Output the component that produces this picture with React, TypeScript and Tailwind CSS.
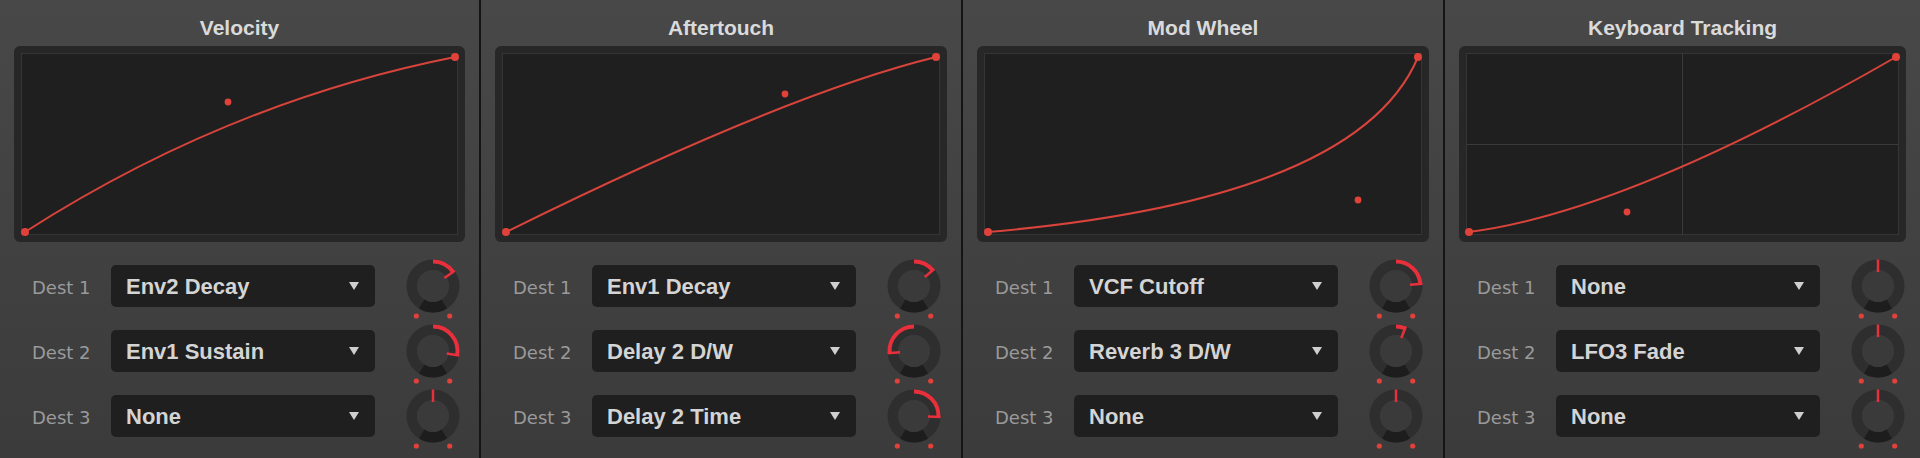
type Row = { dest: string; value: string; knob: number };

type Panel = {
  title: string;
  width: string;
  plotW: number;
  start: [number, number];
  end: [number, number];
  ctrl: [number, number];
  grid?: boolean;
  rows: Row[];
};

const RED = "#e0423a";

const panels: Panel[] = [
  {
    title: "Velocity",
    width: "w-[479px]",
    plotW: 435,
    start: [3, 178],
    end: [433, 3],
    ctrl: [206, 48],
    rows: [
      { dest: "Dest 1", value: "Env2 Decay", knob: 55 },
      { dest: "Dest 2", value: "Env1 Sustain", knob: 100 },
      { dest: "Dest 3", value: "None", knob: 0 },
    ],
  },
  {
    title: "Aftertouch",
    width: "w-[480px]",
    plotW: 436,
    start: [3, 178],
    end: [433, 3],
    ctrl: [282, 40],
    rows: [
      { dest: "Dest 1", value: "Env1 Decay", knob: 50 },
      { dest: "Dest 2", value: "Delay 2 D/W", knob: -95 },
      { dest: "Dest 3", value: "Delay 2 Time", knob: 92 },
    ],
  },
  {
    title: "Mod Wheel",
    width: "w-[480px]",
    plotW: 436,
    start: [3, 178],
    end: [433, 3],
    ctrl: [373, 146],
    rows: [
      { dest: "Dest 1", value: "VCF Cutoff", knob: 85 },
      { dest: "Dest 2", value: "Reverb 3 D/W", knob: 22 },
      { dest: "Dest 3", value: "None", knob: 0 },
    ],
  },
  {
    title: "Keyboard Tracking",
    width: "flex-1",
    plotW: 431,
    start: [2, 178],
    end: [429, 3],
    ctrl: [160, 158],
    grid: true,
    rows: [
      { dest: "Dest 1", value: "None", knob: 0 },
      { dest: "Dest 2", value: "LFO3 Fade", knob: 0 },
      { dest: "Dest 3", value: "None", knob: 0 },
    ],
  },
];

// point on a circle around the knob centre, angle measured clockwise from the top
function pt(r: number, deg: number): [number, number] {
  const a = (deg * Math.PI) / 180;
  return [35 + r * Math.sin(a), 35 - r * Math.cos(a)];
}

function arc(r: number, a0: number, a1: number) {
  const [x0, y0] = pt(r, a0);
  const [x1, y1] = pt(r, a1);
  const large = Math.abs(a1 - a0) > 180 ? 1 : 0;
  const sweep = a1 > a0 ? 1 : 0;
  return `M${x0} ${y0} A${r} ${r} 0 ${large} ${sweep} ${x1} ${y1}`;
}

function Knob({ value }: { value: number }) {
  const [tx0, ty0] = pt(14, value);
  const [tx1, ty1] = pt(26.5, value);
  return (
    <svg width="70" height="70" viewBox="0 0 70 70" className="shrink-0 ml-[23px]">
      <circle cx="35" cy="35" r="21.25" fill="none" stroke="#2e2e2e" strokeWidth="10.5" />
      <path d={arc(21.25, 148, 212)} fill="none" stroke="#1d1d1d" strokeWidth="10.5" />
      <circle cx="35" cy="35" r="16" fill="#3a3a3a" />
      {value !== 0 && (
        <path d={arc(24.5, 0, value)} fill="none" stroke="#e8303c" strokeWidth="4" />
      )}
      <line x1={tx0} y1={ty0} x2={tx1} y2={ty1} stroke="#e8303c" strokeWidth="2.5" />
      <circle cx="18.3" cy="65" r="2.6" fill={RED} />
      <circle cx="51.7" cy="65" r="2.6" fill={RED} />
    </svg>
  );
}

function Curve({ p }: { p: Panel }) {
  const [sx, sy] = p.start;
  const [ex, ey] = p.end;
  const [cx, cy] = p.ctrl;
  return (
    <svg width={p.plotW} height="180" className="block overflow-visible">
      {p.grid && (
        <g stroke="#3a3a3a" strokeWidth="1">
          <line x1={p.plotW / 2} y1="0" x2={p.plotW / 2} y2="180" />
          <line x1="0" y1="90.5" x2={p.plotW} y2="90.5" />
        </g>
      )}
      <path
        d={`M${sx} ${sy} Q${cx} ${cy} ${ex} ${ey}`}
        fill="none"
        stroke="#d8443c"
        strokeWidth="2"
      />
      <circle cx={sx} cy={sy} r="4" fill={RED} />
      <circle cx={ex} cy={ey} r="4" fill={RED} />
      <circle cx={cx} cy={cy} r="3.4" fill={RED} />
    </svg>
  );
}

function Dropdown({ value }: { value: string }) {
  return (
    <div className="w-[264px] h-[42px] shrink-0 rounded-[5px] bg-[#1f1f1f] flex items-center justify-between pl-[15px] pr-[16px]">
      <span className="text-[22px] font-bold text-[#d4d4d4] leading-none pt-[2px] font-['Liberation_Sans',Arial,sans-serif]">
        {value}
      </span>
      <svg width="10" height="8" viewBox="0 0 10 8">
        <path d="M0 0 L10 0 L5 8 Z" fill="#cfcfcf" />
      </svg>
    </div>
  );
}

function ModPanel({ p }: { p: Panel }) {
  return (
    <div className={`${p.width} h-full flex flex-col`}>
      <h2 className="pt-[16px] h-[46px] text-center text-[21px] leading-[24px] font-bold text-[#dadada] font-['Liberation_Sans',Arial,sans-serif]">
        {p.title}
      </h2>

      {/* curve editor */}
      <div className="mx-[14px] h-[196px] rounded-[6px] bg-[#272727] p-[7px]">
        <div className="h-full border border-[#353535] bg-[#1f1f1f]">
          <Curve p={p} />
        </div>
      </div>

      {/* destinations */}
      <div className="mt-[23px] flex flex-col gap-[23px]">
        {p.rows.map((r) => (
          <div key={r.dest} className="h-[42px] flex items-center pl-[32px]">
            <span className="w-[79px] shrink-0 text-[18px] text-[#9a9a9a] pt-[2px] font-['DejaVu_Sans',Verdana,sans-serif]">
              {r.dest}
            </span>
            <Dropdown value={r.value} />
            <Knob value={r.knob} />
          </div>
        ))}
      </div>
    </div>
  );
}

export default function App() {
  return (
    <div className="w-[1920px] h-[458px] flex overflow-hidden bg-gradient-to-b from-[#484848] to-[#3b3b3b]">
      {panels.map((p, i) => (
        <div key={p.title} className={`flex h-full ${p.width === "flex-1" ? "flex-1" : ""}`}>
          {i > 0 && <div className="w-[2px] h-full bg-[#151515] shrink-0" />}
          <ModPanel p={p} />
        </div>
      ))}
    </div>
  );
}
